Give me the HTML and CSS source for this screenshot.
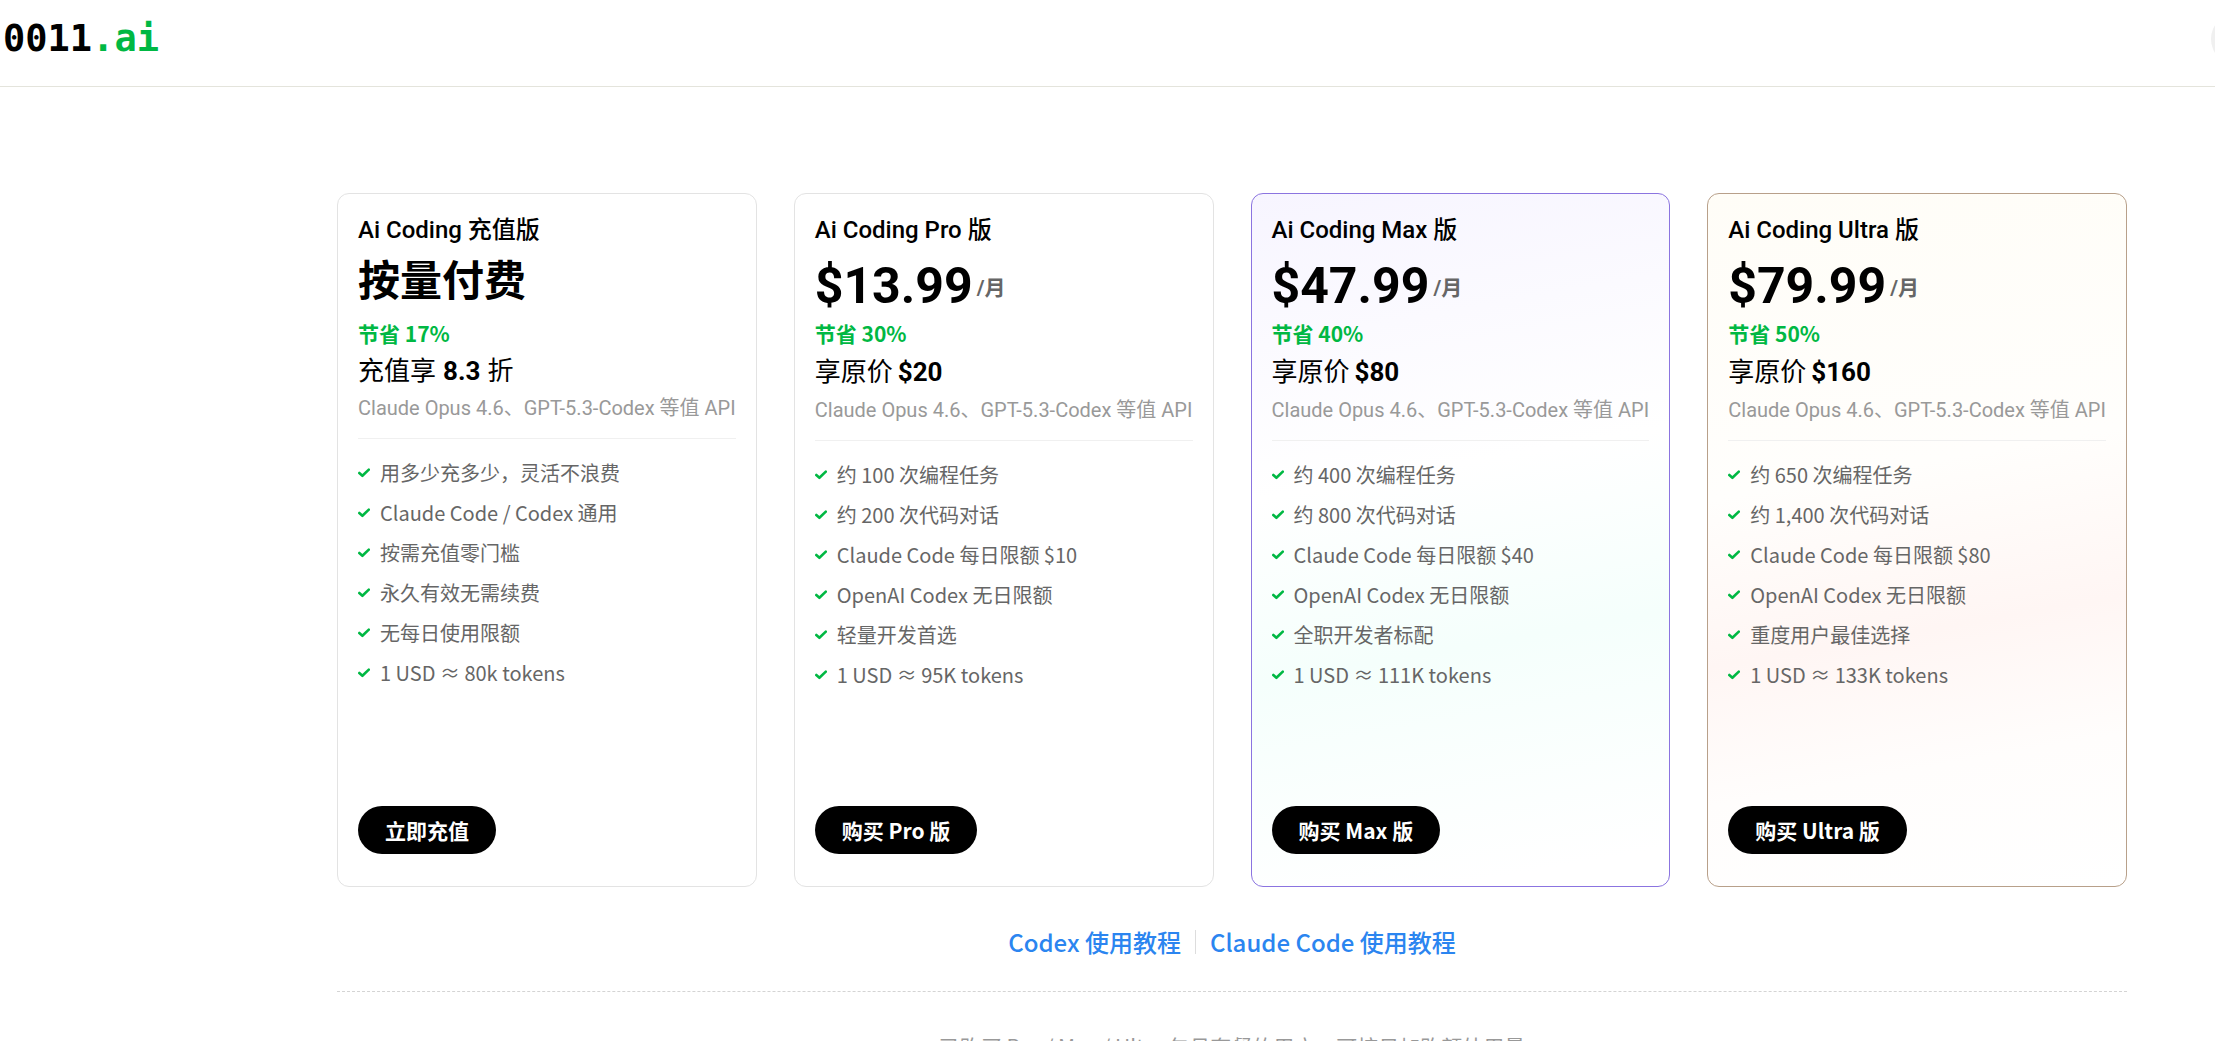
FILE: index.html
```html
<!DOCTYPE html>
<html lang="zh-CN">

<head>
  <meta charset="UTF-8">
  <meta name="viewport" content="width=device-width, initial-scale=1.0">
  <title>0011.ai</title>
  <link rel="stylesheet" href="styles.css">
</head>

<body>
  <!-- check mark used by every feature list -->
  <svg class="sprite" aria-hidden="true">
    <symbol id="check" viewBox="0 0 12 12">
      <path d="M1.3 6 L4.4 8.8 L10.8 2.6" fill="none" stroke="currentColor" stroke-width="2.6" stroke-linecap="round" stroke-linejoin="round" />
    </symbol>
  </svg>

  <header class="header">
    <a class="logo" href="#">0011<span class="logo-suffix">.ai</span></a>
    <button class="avatar" type="button" aria-label="账户"></button>
  </header>

  <main class="main">
    <section class="plans">
      <article class="plan">
        <h2 class="plan-name">Ai Coding 充值版</h2>
        <p class="price price-text">按量付费</p>
        <p class="save">节省 17%</p>
        <p class="worth worth-text">充值享 <b>8.3</b> 折</p>
        <p class="models">Claude Opus 4.6、GPT-5.3-Codex 等值 API</p>
        <ul class="features">
          <li><svg class="check"><use href="#check" /></svg>用多少充多少，灵活不浪费</li>
          <li><svg class="check"><use href="#check" /></svg>Claude Code / Codex 通用</li>
          <li><svg class="check"><use href="#check" /></svg>按需充值零门槛</li>
          <li><svg class="check"><use href="#check" /></svg>永久有效无需续费</li>
          <li><svg class="check"><use href="#check" /></svg>无每日使用限额</li>
          <li><svg class="check"><use href="#check" /></svg>1 USD ≈ 80k tokens</li>
        </ul>
        <button class="buy" type="button">立即充值</button>
      </article>

      <article class="plan">
        <h2 class="plan-name">Ai Coding Pro 版</h2>
        <p class="price">$13.99<span class="per">/月</span></p>
        <p class="save">节省 30%</p>
        <p class="worth">享原价<b>$20</b></p>
        <p class="models">Claude Opus 4.6、GPT-5.3-Codex 等值 API</p>
        <ul class="features">
          <li><svg class="check"><use href="#check" /></svg>约 100 次编程任务</li>
          <li><svg class="check"><use href="#check" /></svg>约 200 次代码对话</li>
          <li><svg class="check"><use href="#check" /></svg>Claude Code 每日限额 $10</li>
          <li><svg class="check"><use href="#check" /></svg>OpenAI Codex 无日限额</li>
          <li><svg class="check"><use href="#check" /></svg>轻量开发首选</li>
          <li><svg class="check"><use href="#check" /></svg>1 USD ≈ 95K tokens</li>
        </ul>
        <button class="buy" type="button">购买 Pro 版</button>
      </article>

      <article class="plan plan-max">
        <h2 class="plan-name">Ai Coding Max 版</h2>
        <p class="price">$47.99<span class="per">/月</span></p>
        <p class="save">节省 40%</p>
        <p class="worth">享原价<b>$80</b></p>
        <p class="models">Claude Opus 4.6、GPT-5.3-Codex 等值 API</p>
        <ul class="features">
          <li><svg class="check"><use href="#check" /></svg>约 400 次编程任务</li>
          <li><svg class="check"><use href="#check" /></svg>约 800 次代码对话</li>
          <li><svg class="check"><use href="#check" /></svg>Claude Code 每日限额 $40</li>
          <li><svg class="check"><use href="#check" /></svg>OpenAI Codex 无日限额</li>
          <li><svg class="check"><use href="#check" /></svg>全职开发者标配</li>
          <li><svg class="check"><use href="#check" /></svg>1 USD ≈ 111K tokens</li>
        </ul>
        <button class="buy" type="button">购买 Max 版</button>
      </article>

      <article class="plan plan-ultra">
        <h2 class="plan-name">Ai Coding Ultra 版</h2>
        <p class="price">$79.99<span class="per">/月</span></p>
        <p class="save">节省 50%</p>
        <p class="worth">享原价<b>$160</b></p>
        <p class="models">Claude Opus 4.6、GPT-5.3-Codex 等值 API</p>
        <ul class="features">
          <li><svg class="check"><use href="#check" /></svg>约 650 次编程任务</li>
          <li><svg class="check"><use href="#check" /></svg>约 1,400 次代码对话</li>
          <li><svg class="check"><use href="#check" /></svg>Claude Code 每日限额 $80</li>
          <li><svg class="check"><use href="#check" /></svg>OpenAI Codex 无日限额</li>
          <li><svg class="check"><use href="#check" /></svg>重度用户最佳选择</li>
          <li><svg class="check"><use href="#check" /></svg>1 USD ≈ 133K tokens</li>
        </ul>
        <button class="buy" type="button">购买 Ultra 版</button>
      </article>
    </section>

    <nav class="guides">
      <a href="#">Codex 使用教程</a>
      <a href="#">Claude Code 使用教程</a>
    </nav>

    <p class="addon">已购买 Pro / Max / Ultra 包月套餐的用户，可按日加购额外用量</p>
  </main>
</body>

</html>
```
FILE: styles.css
```css
* {
  box-sizing: border-box;
}

html {
  overflow: hidden;
}

body {
  margin: 0;
  background: #fff;
  color: #000;
  font-family: "Noto Sans CJK SC", sans-serif;
}

h2,
p,
ul {
  margin: 0;
  padding: 0;
}

.sprite {
  display: none;
}

/* header */
.header {
  display: flex;
  align-items: center;
  justify-content: space-between;
  padding: 11px 0 19px 3px;
  border-bottom: 1px solid #e4e4dc;
}

.logo {
  color: #000;
  font: 700 37px/56px "DejaVu Sans Mono", monospace;
  text-decoration: none;
}

.logo-suffix {
  color: #00b843;
}

.avatar {
  flex: none;
  width: 52px;
  height: 52px;
  margin-right: -48px;
  border: 0;
  border-radius: 50%;
  background: #f0f0f0;
}

/* plans */
.main {
  padding: 106px 88px 0 337px;
}

.plans {
  display: grid;
  grid-template-columns: repeat(4, 1fr);
  gap: 37px;
}

.plan {
  display: flex;
  flex-direction: column;
  align-items: flex-start;
  min-height: 694px;
  padding: 20px 20px 32px;
  border: 1px solid #e3e3e3;
  border-radius: 12px;
}

.plan-max {
  border-color: #8b74e0;
  background: linear-gradient(170deg, #f7f5ff 0%, #fff 40%, #f5fffc 64%, #fff 95%);
}

.plan-ultra {
  border-color: #b8a08a;
  background: linear-gradient(170deg, #fffdf7 0%, #fffefc 40%, #fff6f4 62%, #fffdfc 80%, #fff 100%);
}

.plan-name {
  font: 500 24px/32px Roboto, "Noto Sans CJK SC", sans-serif;
}

.price {
  display: flex;
  align-items: center;
  gap: 4px;
  padding-top: 8px;
  font: 700 50px/64px Roboto, "Noto Sans CJK SC", sans-serif;
}

.price-text {
  margin-bottom: 8px;
  font-size: 42px;
  line-height: 56px;
}

.per {
  padding-top: 4px;
  color: #666;
  font-size: 21px;
  line-height: 28px;
}

.save {
  color: #00b843;
  font-size: 21px;
  font-weight: 700;
  line-height: 30px;
}

.worth {
  display: flex;
  gap: 5px;
  font: 400 26px/49px Roboto, "Noto Sans CJK SC", sans-serif;
}

.worth-text {
  gap: 7px;
  line-height: 47px;
}

.models {
  width: 100%;
  padding-bottom: 17px;
  border-bottom: 1px solid #f0f0f0;
  color: #999;
  font: 400 20px/26px Roboto, "Noto Sans CJK SC", sans-serif;
  white-space: nowrap;
}

.features {
  padding-top: 14px;
  list-style: none;
}

.features li {
  display: flex;
  align-items: center;
  gap: 10px;
  color: #666;
  font-size: 20px;
  line-height: 40px;
}

.check {
  flex: none;
  width: 12px;
  height: 12px;
  color: #00b843;
}

.buy {
  margin-top: auto;
  padding: 0 27px;
  border: 0;
  border-radius: 24px;
  background: #000;
  color: #fff;
  font: 700 21px/48px "Noto Sans CJK SC", sans-serif;
}

/* below the cards */
.guides {
  display: flex;
  justify-content: center;
  padding: 43px 0 37px;
  border-bottom: 1px dashed #d4d4d4;
}

.guides a {
  padding: 0 14px;
  color: #2b85f0;
  font-size: 24px;
  font-weight: 500;
  line-height: 24px;
  text-decoration: none;
}

.guides a + a {
  border-left: 1px solid #ddd;
}

.addon {
  padding-top: 38px;
  color: #999;
  font-size: 21px;
  line-height: 32px;
  text-align: center;
}
```
